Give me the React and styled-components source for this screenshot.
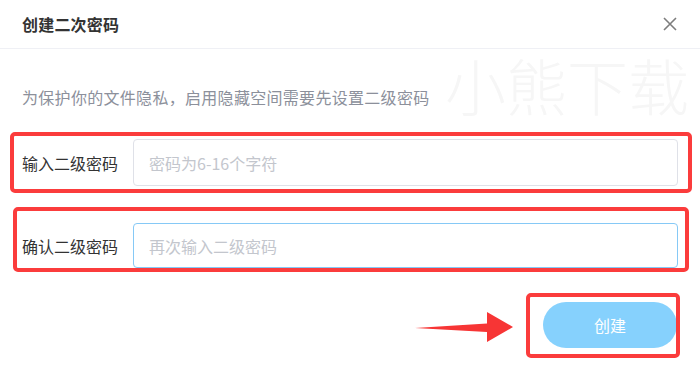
import styled, { createGlobalStyle } from "styled-components";

const GlobalStyle = createGlobalStyle`
html, body {
    margin: 0;
    padding: 0;
    background: #fff;
}
body {
    font-family: "Noto Sans CJK SC", "Microsoft YaHei", sans-serif;
    color: #333;
}
* { box-sizing: border-box; }
`

const Dialog = styled.div`
position: relative;
width: 700px;
height: 376px;
background: #fff;
overflow: hidden;
`
const Header = styled.div`
height: 49px;
display: flex;
align-items: center;
justify-content: space-between;
padding: 0 23px 0 22px;
border-bottom: 1px solid #eff0f5;
`
const Title = styled.div`
font-size: 16px;
font-weight: 700;
color: #333;
letter-spacing: 0.2px;
`
const CloseButton = styled.button`
border: none;
background: none;
padding: 0;
width: 14px;
height: 14px;
display: flex;
cursor: pointer;
`
const Watermark = styled.div`
position: absolute;
top: 40px;
left: 445px;
font-size: 61px;
font-weight: 300;
color: #f6f6f6;
pointer-events: none;
white-space: nowrap;
`
const Body = styled.div`
position: relative;
padding: 0 22px;
`
const Description = styled.div`
margin-top: 37px;
font-size: 16px;
line-height: 22px;
color: #8c909b;
letter-spacing: 0.3px;
`
const Row = styled.div`
position: relative;
display: flex;
align-items: center;
margin-top: ${p => p.$top}px;
`
const Label = styled.div`
width: 111px;
flex-shrink: 0;
font-size: 16px;
color: #333;
`
const Input = styled.input`
flex: 1;
height: ${p => p.$height}px;
border: 1px solid ${p => (p.$focused ? "#86c9f6" : "#dfe1e8")};
border-radius: 4px;
padding: 0 15px;
font-size: 16px;
font-family: inherit;
outline: none;
color: #333;
&::placeholder {
    color: #c3c6cd;
}
`
const Highlight = styled.div`
position: absolute;
left: ${p => p.$l}px;
top: ${p => p.$t}px;
right: ${p => p.$r}px;
bottom: ${p => p.$b}px;
border: 4px solid #fb3c3c;
border-radius: 5px;
pointer-events: none;
`
const Footer = styled.div`
display: flex;
justify-content: flex-end;
margin-top: 34px;
padding-right: 1px;
`
const ButtonWrap = styled.div`
position: relative;
`
const CreateButton = styled.button`
width: 134px;
height: 46px;
border: none;
border-radius: 23px;
background: #86d1fd;
color: #fff;
font-size: 16px;
font-family: inherit;
cursor: pointer;
`
const Arrow = styled.svg`
position: absolute;
left: -128px;
top: 10px;
`

const App = () => {
    return (
        <>
            <GlobalStyle />
            <Dialog>
                <Header>
                    <Title>创建二次密码</Title>
                    <CloseButton aria-label="close">
                        <svg width="14" height="14" viewBox="0 0 14 14">
                            <path d="M1 1 L13 13 M13 1 L1 13" stroke="#7d7d7d" strokeWidth="1.6" fill="none" />
                        </svg>
                    </CloseButton>
                </Header>
                <Watermark>小熊下载</Watermark>
                <Body>
                    <Description>为保护你的文件隐私，启用隐藏空间需要先设置二级密码</Description>
                    <Row $top={31}>
                        <Label>输入二级密码</Label>
                        <Input $height={47} placeholder="密码为6-16个字符" />
                        <Highlight $l={-12} $t={-7} $r={-14} $b={-7} />
                    </Row>
                    <Row $top={37}>
                        <Label>确认二级密码</Label>
                        <Input $height={45} $focused placeholder="再次输入二级密码" />
                        <Highlight $l={-9} $t={-16} $r={-11} $b={-4} />
                    </Row>
                    <Footer>
                        <ButtonWrap>
                            <CreateButton>创建</CreateButton>
                            <Highlight $l={-17} $t={-9} $r={-3} $b={-10} />
                            <Arrow width="98" height="31" viewBox="0 0 98 31">
                                <path d="M0 16 L72 11.5 L72 0 L98 15 L72 30 L72 20 Z" fill="#f73535" />
                            </Arrow>
                        </ButtonWrap>
                    </Footer>
                </Body>
            </Dialog>
        </>
    );
}

export default App;
